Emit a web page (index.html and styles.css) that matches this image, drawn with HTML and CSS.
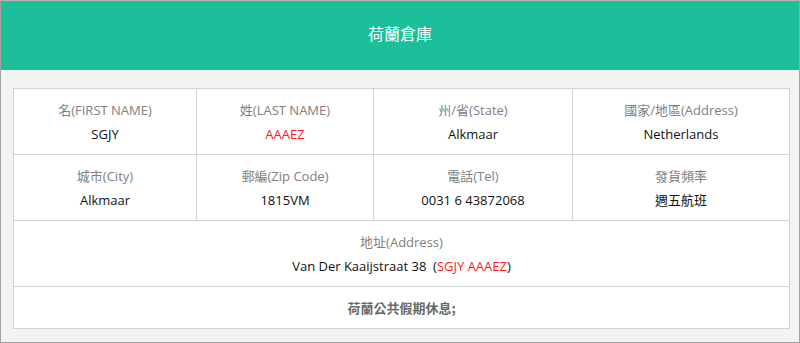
FILE: index.html
```html
<!DOCTYPE html>
<html lang="zh-Hant">
<head>
<meta charset="utf-8">
<title>荷蘭倉庫</title>
<link rel="stylesheet" href="styles.css">
</head>
<body>
<div class="frame">
  <header class="head">荷蘭倉庫</header>
  <main class="body">
    <table class="info">
      <colgroup>
        <col class="c1"><col class="c2"><col class="c3"><col class="c4">
      </colgroup>
      <tr>
        <td><div class="lbl">名(FIRST NAME)</div><div class="val">SGJY</div></td>
        <td><div class="lbl">姓(LAST NAME)</div><div class="val red">AAAEZ</div></td>
        <td><div class="lbl">州/省(State)</div><div class="val">Alkmaar</div></td>
        <td><div class="lbl">國家/地區(Address)</div><div class="val">Netherlands</div></td>
      </tr>
      <tr>
        <td><div class="lbl">城市(City)</div><div class="val">Alkmaar</div></td>
        <td><div class="lbl">郵編(Zip Code)</div><div class="val">1815VM</div></td>
        <td><div class="lbl">電話(Tel)</div><div class="val">0031 6 43872068</div></td>
        <td><div class="lbl">發貨頻率</div><div class="val">週五航班</div></td>
      </tr>
      <tr>
        <td colspan="4"><div class="lbl">地址(Address)</div><div class="val">Van Der Kaaijstraat 38&nbsp; (<span class="red">SGJY AAAEZ</span>)</div></td>
      </tr>
      <tr>
        <td colspan="4" class="note">荷蘭公共假期休息;</td>
      </tr>
    </table>
  </main>
</div>
</body>
</html>
```
FILE: styles.css
```css
html, body {
  margin: 0;
  padding: 0;
  background: #fff;
}

.frame {
  width: 798px;
  height: 341px;
  border: 1px solid #a3a3a3;
  border-top-color: #b5b5b5;
  background: #f3f3f3;
  font-family: "Open Sans", "Noto Sans CJK TC", sans-serif;
  display: flex;
  flex-direction: column;
}

.head {
  height: 69px;
  background: #1dbf9b;
  color: #fff;
  font-family: "Noto Sans CJK TC", sans-serif;
  font-size: 16px;
  display: flex;
  align-items: center;
  justify-content: center;
  padding-bottom: 6px;
  box-sizing: border-box;
}

.body {
  padding: 18px 10px 0 12px;
}

.info {
  width: 776px;
  border-collapse: collapse;
  background: #fff;
  table-layout: fixed;
}

.c1 { width: 183px; }
.c2 { width: 177px; }
.c3 { width: 199px; }
.c4 { width: 217px; }

.info td {
  border: 1px solid #d4d4d4;
  text-align: center;
  padding: 9px 4px 8px;
  font-size: 13px;
  line-height: 24px;
}

.lbl {
  color: #808080;
}

.val {
  color: #111;
}

.red {
  color: #ff1a1a;
}

.info td.note {
  color: #6a6a6a;
  font-weight: bold;
  font-family: "Noto Sans CJK TC", sans-serif;
  padding: 9px 4px 8px;
}
```
